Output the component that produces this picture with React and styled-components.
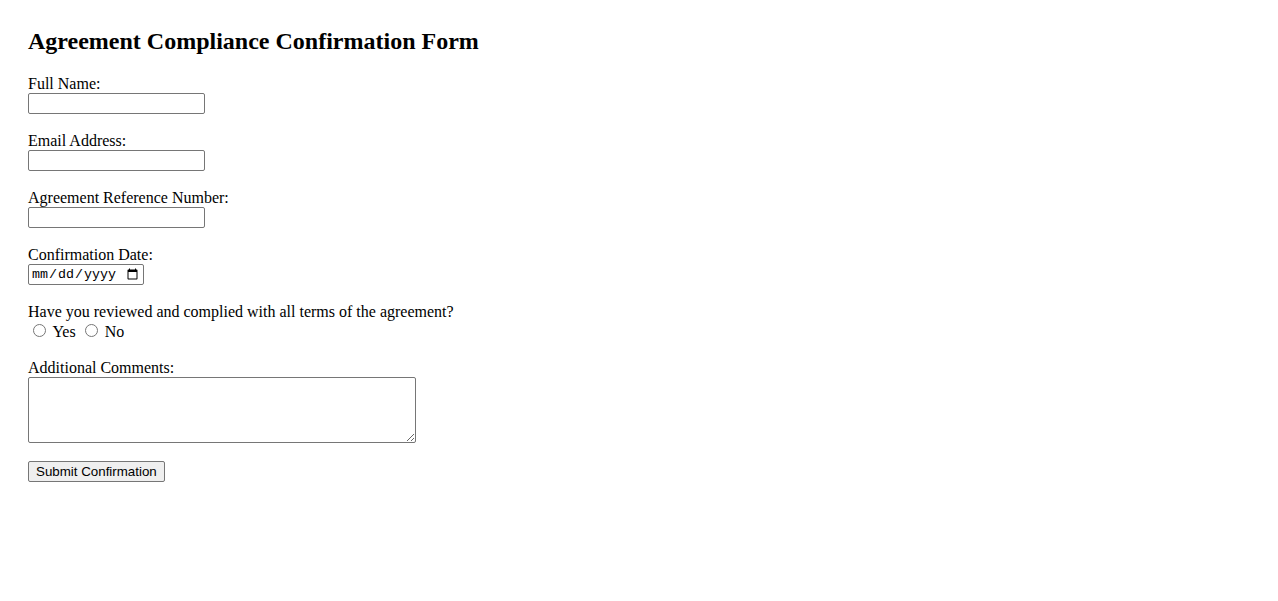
import React from "react";
import styled, { createGlobalStyle } from "styled-components";

const GlobalStyle = createGlobalStyle`
   body {
      margin: 0;
      padding: 28px;
      font-family: "Liberation Serif", "Times New Roman", serif;
      font-size: 16px;
      color: #000;
      background: #fff;
   }
`;

const Title = styled.h2`
   font-size: 24px;
   font-weight: bold;
   margin: 0 0 20px;
`;

const FieldGroup = styled.div`
   margin-bottom: 18px;
`;

const Label = styled.label`
   display: block;
   line-height: 18px;
`;

const TextInput = styled.input`
   display: block;
   box-sizing: border-box;
   width: 177px;
   height: 21px;
   margin: 0;
   padding: 1px 2px;
   border: 1px solid #767676;
   border-radius: 2px;
   font-family: "Liberation Sans", Arial, sans-serif;
   font-size: 13.33px;
`;

const DateInput = styled(TextInput)`
   width: 116px;
   font-family: "Liberation Mono", "Courier New", monospace;
   font-size: 13.33px;
`;

const RadioRow = styled.div``;

const Radio = styled.input`
   margin: 3px 3px 0 5px;
   width: 13px;
   height: 13px;
`;

const Comments = styled.textarea`
   display: block;
   box-sizing: border-box;
   width: 388px;
   height: 66px;
   margin: 0;
   border: 1px solid #767676;
   border-radius: 2px;
   font-family: "Liberation Mono", monospace;
   font-size: 13.33px;
`;

const SubmitButton = styled.button`
   box-sizing: border-box;
   height: 21px;
   margin: 0;
   padding: 1px 7px;
   border: 1px solid #767676;
   border-radius: 2px;
   background: #efefef;
   font-family: "Liberation Sans", Arial, sans-serif;
   font-size: 13.33px;
   color: #000;
`;

export default function App() {
   return (
      <>
         <GlobalStyle />
         <Title>Agreement Compliance Confirmation Form</Title>
         <form onSubmit={(e) => e.preventDefault()}>
            <FieldGroup>
               <Label htmlFor="fullName">Full Name:</Label>
               <TextInput id="fullName" type="text" />
            </FieldGroup>
            <FieldGroup>
               <Label htmlFor="email">Email Address:</Label>
               <TextInput id="email" type="email" />
            </FieldGroup>
            <FieldGroup>
               <Label htmlFor="refNumber">Agreement Reference Number:</Label>
               <TextInput id="refNumber" type="text" />
            </FieldGroup>
            <FieldGroup>
               <Label htmlFor="confDate">Confirmation Date:</Label>
               <DateInput id="confDate" type="date" />
            </FieldGroup>
            <FieldGroup>
               <Label>Have you reviewed and complied with all terms of the agreement?</Label>
               <RadioRow>
                  <Radio id="yes" type="radio" name="complied" value="yes" />{" "}
                  <label htmlFor="yes">Yes</label>{" "}
                  <Radio id="no" type="radio" name="complied" value="no" />{" "}
                  <label htmlFor="no">No</label>
               </RadioRow>
            </FieldGroup>
            <FieldGroup>
               <Label htmlFor="comments">Additional Comments:</Label>
               <Comments id="comments" rows={4} />
            </FieldGroup>
            <SubmitButton type="submit">Submit Confirmation</SubmitButton>
         </form>
      </>
   );
}
